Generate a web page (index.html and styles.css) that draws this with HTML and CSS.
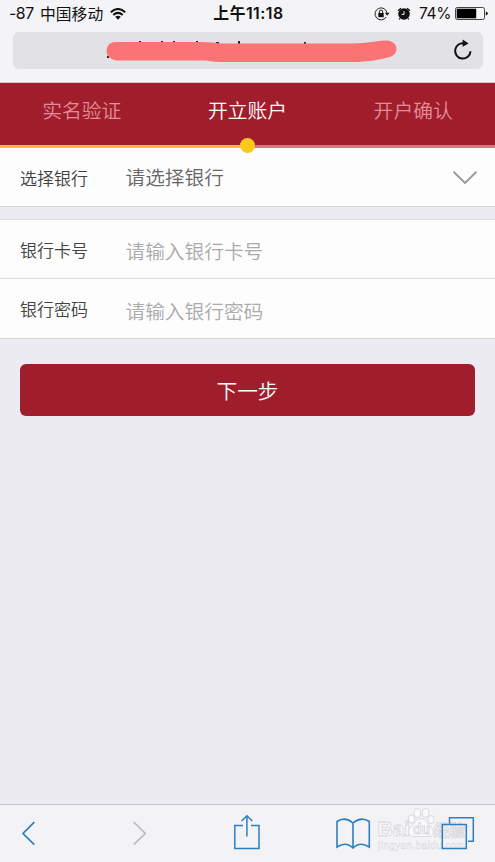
FILE: index.html
```
<!DOCTYPE html>
<html lang="zh-CN">
<head>
<meta charset="utf-8">
<title>开立账户</title>
<link rel="stylesheet" href="styles.css">
</head>
<body>
<header class="browser">
  <div class="status">
    <div class="status-left">
      <span class="signal">-87</span><span class="carrier">中国移动</span>
      <svg class="wifi" width="16" height="12" viewBox="0 0 16 12"><g fill="none" stroke="#111" stroke-width="2"><path d="M.8 4.2Q8-2.2 15.2 4.2"/><path d="M3.3 7Q8 2.8 12.7 7"/></g><path d="M5.2 8.8Q8 6.5 10.8 8.8L8 11.7Z" fill="#111"/></svg>
    </div>
    <div class="clock">上午11:18</div>
    <div class="status-right">
      <svg width="16" height="14" viewBox="0 0 16 14"><path d="M12.2 10A6 6 0 1 1 13 6" fill="none" stroke="#222" stroke-width="1"/><path d="M10.800 5.800h4.800l-2.400 3z" fill="#222"/><rect x="4.300" y="6" width="5.400" height="4.200" fill="#111"/><path d="M5.300 6V4.800a1.700 1.700 0 0 1 3.400 0V6" fill="none" stroke="#111"/></svg>
      <svg class="alarm" width="14" height="14" viewBox="0 0 14 14"><circle cx="7" cy="7" r="5.800" fill="#111"/><path d="M1 3.800L4 1.200M13 3.800L10 1.200M3 11.300L2.200 12.500M11 11.300l.8 1.200" stroke="#111" stroke-width="1.300"/><path d="M7 4.200v3.200H4.600" fill="none" stroke="#f4f4f5" stroke-width="1"/></svg>
      <span class="percent">74%</span>
      <svg class="battery" width="33" height="13" viewBox="0 0 33 13"><rect x=".5" y=".5" width="29" height="12" rx="1.800" fill="#f9f9f9" stroke="#444"/><rect x="1.700" y="1.700" width="19.500" height="9.600" fill="#000"/><path d="M30.800 4.400q2 .4 2 2.100t-2 2.100z" fill="#111"/></svg>
    </div>
  </div>
  <div class="address">
    <svg class="mark" width="292" height="24" viewBox="0 0 292 24"><path d="M33 2h2v2h-2zM55 2h2v2h-2zM67 2h2v2h-2zM90 2h2v2h-2zM110 3h3v2h-3zM132 2h2v4h-2zM198 3h2v2h-2zM1 17h2v2H1z" fill="#222"/><path d="M10 3H95Q106 3 116 4.500H225Q258 5 273 2Q287 -.5 290 7Q292 15 284 18Q270 22 252 23H122Q108 23 100 21.500H10Q1 20 .5 12Q1 3 10 3Z" fill="#fb7373"/></svg>
    <svg class="reload" width="20" height="22" viewBox="0 0 20 22"><path d="M11.500 4.400A7.700 7.700 0 1 0 17.500 12.300" fill="none" stroke="#111" stroke-width="2"/><path d="M9.600 .5l6 4-6 3.300z" fill="#111"/></svg>
  </div>
</header>
<nav class="steps">
  <div class="tabs"><span>实名验证</span><span class="current">开立账户</span><span>开户确认</span></div>
  <div class="progress"><i class="done"></i><i class="dot"></i></div>
</nav>
<main>
  <section class="group first">
    <div class="row"><label>选择银行</label><span class="select">请选择银行</span>
      <svg class="chevron" width="26" height="14" viewBox="0 0 26 14"><path d="M1.500 .7L13 12 24.500 .7" fill="none" stroke="#999" stroke-width="1.900"/></svg>
    </div>
  </section>
  <section class="group inputs">
    <div class="row card"><label>银行卡号</label><span class="hint">请输入银行卡号</span></div>
    <div class="row pass"><label>银行密码</label><span class="hint">请输入银行密码</span></div>
  </section>
  <button class="next">下一步</button>
</main>
<footer class="toolbar">
  <svg width="495" height="56" viewBox="0 0 495 56">
    <g class="watermark">
      <g fill="#fafafb" stroke="#d9d9dd" stroke-width="1">
        <ellipse cx="411.500" cy="14" rx="3.300" ry="4"/><ellipse cx="417.300" cy="8" rx="3.300" ry="4.300"/><ellipse cx="425.500" cy="8" rx="3.300" ry="4.300"/><ellipse cx="431" cy="14.500" rx="3.200" ry="4"/>
        <path d="M421 13.500C416 13.500 414.500 19 411 22C406.500 26 409 32 414 31.500H428C434 32 435 26 431 22C427 18.500 426 13.500 421 13.500Z"/>
      </g>
      <text x="377.500" y="31" class="wm-big">Bai</text>
      <text x="413" y="29" class="wm-du">du</text>
      <text x="434" y="30.500" class="wm-cn">经验</text>
      <text x="378" y="43.500" class="wm-url" textLength="87">jingyan.baidu.com</text>
    </g>
    <g fill="none" stroke="#2d7fc1" stroke-width="1.700" transform="translate(0 -.5)">
      <path d="M34.300 17.700L23 29 34.300 40.200"/>
      <path d="M133.700 17.700L145.300 29 133.700 40.200" stroke="#bcbcc0"/>
      <path d="M243 21H234.800V44H259V21H251M246.900 32V11.500M241.500 16.500L246.900 11.300 252.300 16.500" stroke-width="1.500"/>
      <path d="M353 18.500Q345 11.500 337 17V42.500Q346 36.500 353 43.500Q360 36.500 369.300 42.500V17Q361 11.500 353 18.500V43.500" stroke-width="1.600"/>
      <path d="M449.500 19V13.200H473.300V36.800H468M442.300 20H466.300V44H442.300Z" stroke-width="1.500"/>
    </g>
  </svg>
</footer>
</body>
</html>
```
FILE: styles.css
```
* { box-sizing: border-box; }
body {
  margin: 0;
  width: 495px;
  height: 862px;
  display: flex;
  flex-direction: column;
  overflow: hidden;
  background: #ecebf2;
  font-family: "Noto Sans CJK SC", "Noto Sans", sans-serif;
  font-weight: 350;
}
svg { display: block; flex: none; }
.browser { height: 83px; background: #f4f4f6; border-bottom: 1px solid #e6c3c8; flex: none; }
.status {
  height: 32px;
  padding: 0 7px 5px 9px;
  display: grid;
  grid-template-columns: 1fr auto 1fr;
  align-items: center;
  color: #111;
  line-height: 26px;
}
.status-left, .status-right { display: flex; align-items: center; }
.status-right { justify-content: flex-end; }
.signal { font: 15.800px/26px Inter, sans-serif; width: 31px; letter-spacing: -.4px; }
.carrier { font-size: 15.800px; font-weight: 400; }
.wifi { margin-left: 7px; }
.clock { font: 600 15.800px/26px Inter, "Noto Sans CJK SC", sans-serif; letter-spacing: .5px; }
.alarm { margin-left: 7px; }
.percent { font: 15.500px/26px Inter, sans-serif; margin-left: 8px; letter-spacing: -.4px; }
.status-right > :first-child { margin-left: -4px; }
.battery { margin-left: 4px; }
.address {
  margin: 0 12px 0 13px;
  height: 37px;
  border-radius: 6px;
  background: #e1e1e6;
  display: flex;
  align-items: flex-start;
  padding: 7px 10px 0 93px;
}
.reload { margin: 0 0 0 auto; }
.steps { background: #a01e2b; height: 65px; flex: none; }
.tabs { display: grid; grid-template-columns: 1fr 1fr 1fr; height: 62px; font-size: 19.800px; line-height: 53px; text-align: center; color: #e08d98; margin: 0 -1px; }
.tabs .current { color: #fff; }
.progress { position: relative; height: 3px; background: #df7583; }
.done { display: block; width: 247px; height: 3px; background: #f9b83f; }
.dot { position: absolute; left: 240px; top: -7px; width: 15px; height: 15px; border-radius: 50%; background: #fbc81c; }
.group { background: #fdfdfe; border-bottom: 1px solid #d5d5da; }
.first { height: 59px; }
.inputs { margin-top: 12px; border-top: 1px solid #dedee3; height: 120px; }
.row { display: flex; align-items: center; height: 59px; padding: 0 17px 0 20px; }
.row label { width: 105.500px; font-size: 17px; color: #424242; }
.select, .hint { font-size: 19.700px; color: #666; }
.hint { color: #aaa; padding-top: 2px; }
.pass .hint { padding-top: 4px; }
.first .select { padding-bottom: 3px; }
.first label { padding-bottom: 1px; }
.chevron { margin-left: auto; }
.card { border-bottom: 1px solid #dfdfe2; }
.next {
  display: block;
  width: 455px;
  height: 52px;
  margin: 25px 0 0 20px;
  padding: 0 0 1px;
  border: 0;
  border-radius: 6px;
  background: #a01e2b;
  color: #fff;
  font: 350 20.700px "Noto Sans CJK SC", sans-serif;
}
.toolbar { margin-top: auto; height: 58px; border-top: 1px solid #c4c4cb; background: #f3f3f6; flex: none; }
.watermark { font-family: "Liberation Sans", "Noto Sans CJK SC", sans-serif; fill: #fafafb; stroke: #d5d5da; stroke-width: .8px; }
.wm-big { font-size: 21px; font-weight: 700; }
.wm-du { font-size: 14px; font-weight: 700; }
.wm-cn { font-size: 15.500px; font-weight: 700; }
.wm-url { font-size: 10px; stroke-width: .4px; }
```
